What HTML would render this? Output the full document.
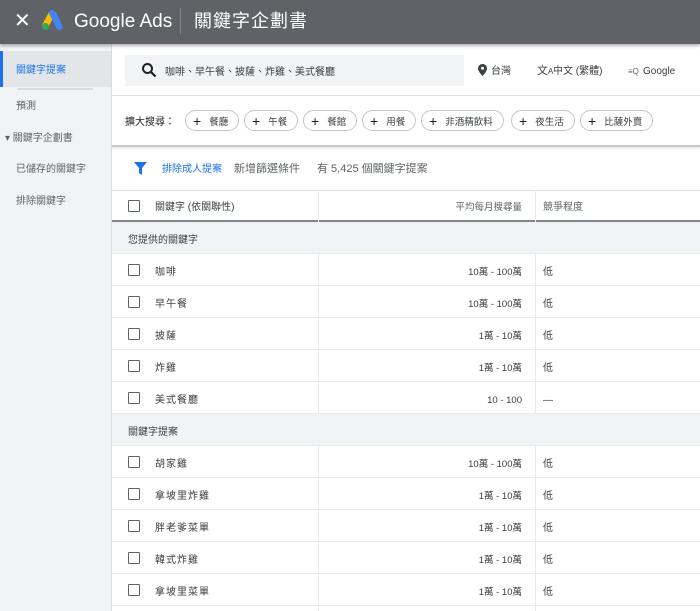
<!DOCTYPE html>
<html style="width:700px;height:611px;overflow:hidden"><head><meta charset="utf-8"><style>
*{margin:0;padding:0;box-sizing:border-box}
body{width:700px;height:611px;overflow:hidden;background:#fff;font-family:"Liberation Sans","Noto Sans CJK TC",sans-serif;position:relative;color:#3c4043}
.abs{position:absolute}
.hdr{left:0;top:0;width:700px;height:44px;background:#5f6368;box-shadow:0 2px 3px rgba(0,0,0,.3);z-index:5}
.side{left:0;top:44px;width:112px;height:567px;background:#f1f3f4;border-right:1px solid #dadce0}
.si{position:absolute;left:16px;font-size:10px;line-height:14px;color:#5f6368}
.row{position:absolute;left:112px;width:588px;height:32px;border-bottom:1px solid #e8eaed;font-size:10px;line-height:31px;color:#3c4043}
.row .cb{position:absolute;left:16px;top:10px;width:12px;height:12px;border:1.5px solid #5f6368;border-radius:1px}
.row .kw{position:absolute;left:43px;top:3px;letter-spacing:1px}
.row .vol{position:absolute;right:178px;top:3px;font-size:9.5px}
.row .cmp{position:absolute;left:431px;top:3px}
.row .d1{position:absolute;left:206px;top:0;height:32px;border-left:1px solid #e8eaed}
.row .d2{position:absolute;left:423px;top:0;height:32px;border-left:1px solid #e8eaed}
.sec{position:absolute;left:112px;width:588px;height:32px;background:#f1f3f4;border-bottom:1px solid #e8eaed;font-size:10px;line-height:31px;color:#3c4043;padding:3px 0 0 16px}
.chip{position:absolute;top:110px;height:21px;border:1px solid #c4c7c5;border-radius:11px;font-size:9.5px;color:#3c4043;line-height:19px;padding:1px 10px 0 7px;white-space:nowrap}
.chip b{font-weight:normal;font-size:14px;color:#202124;margin-right:8px;vertical-align:-1px}
</style></head><body>
<div class="abs hdr">
  <div class="abs" style="left:14px;top:10px;color:#fff;font-size:20px;line-height:22px">✕</div>
  <svg class="abs" style="left:40px;top:10px" width="24" height="22" viewBox="0 0 24 22">
    <path d="M9 2 L16 2 L22 15 L16 18 Z" fill="#4285f4"/>
    <path d="M9 2 L2 15 L8 18 L12.5 9 Z" fill="#fbbc04"/>
    <circle cx="5.5" cy="16.5" r="3.5" fill="#34a853"/>
    <path d="M12 3 L19.5 17" stroke="#4285f4" stroke-width="6" stroke-linecap="round"/>
  </svg>
  <div class="abs" style="left:74px;top:11px;color:#fff;font-size:19px;line-height:22px">Google Ads</div>
  <div class="abs" style="left:180px;top:8px;width:1px;height:26px;background:#80868b"></div>
  <div class="abs" style="left:194px;top:10px;color:#fff;font-size:18px;line-height:22px;letter-spacing:1px">關鍵字企劃書</div>
</div>
<div class="abs side">
  <div class="abs" style="left:0;top:7px;width:111px;height:36px;background:#e3e5e8"></div>
  <div class="abs" style="left:0;top:7px;width:3px;height:36px;background:#1a73e8"></div>
  <div class="si" style="top:20px;color:#1a73e8">關鍵字提案</div>
  <div class="abs" style="left:18px;top:44px;width:75px;height:2px;background:#dadce0"></div>
  <div class="si" style="top:56px">預測</div>
  <div class="si" style="left:5px;top:88px">▾ 關鍵字企劃書</div>
  <div class="si" style="top:119px">已儲存的關鍵字</div>
  <div class="si" style="top:151px">排除關鍵字</div>
</div>
<div class="abs" style="left:125px;top:55px;width:339px;height:31px;background:#f1f3f4"></div>
<svg class="abs" style="left:141px;top:62px" width="16" height="16" viewBox="0 0 16 16"><circle cx="6.5" cy="6.5" r="4.5" fill="none" stroke="#202124" stroke-width="2"/><path d="M10 10 L14.5 14.5" stroke="#202124" stroke-width="2.2"/></svg>
<div class="abs" style="left:165px;top:66px;font-size:10px;line-height:14px;color:#3c4043">咖啡、早午餐、披薩、炸雞、美式餐廳</div>
<svg class="abs" style="left:478px;top:64px" width="9" height="12" viewBox="0 0 9 12"><path d="M4.5 0 C2 0 0 2 0 4.5 C0 7.5 4.5 12 4.5 12 C4.5 12 9 7.5 9 4.5 C9 2 7 0 4.5 0Z" fill="#3c4043"/><circle cx="4.5" cy="4.3" r="1.5" fill="#fff"/></svg>
<div class="abs" style="left:491px;top:65px;font-size:10px;line-height:14px">台灣</div>
<div class="abs" style="left:537px;top:64px;font-size:11px;line-height:14px;color:#3c4043">文<span style="font-size:8px">A</span></div>
<div class="abs" style="left:553px;top:65px;font-size:10px;line-height:14px">中文 (繁體)</div>
<div class="abs" style="left:628px;top:66px;font-size:8px;line-height:12px;color:#5f6368">≡Q</div>
<div class="abs" style="left:643px;top:65px;font-size:10px;line-height:14px">Google</div>
<div class="abs" style="left:112px;top:95px;width:588px;height:1px;background:#e0e0e0"></div>
<div class="abs" style="left:125px;top:116px;font-size:10px;line-height:14px;color:#202124">擴大搜尋：</div>
<div class="chip" style="left:185px"><b>+</b>餐廳</div>
<div class="chip" style="left:244px"><b>+</b>午餐</div>
<div class="chip" style="left:303px"><b>+</b>餐館</div>
<div class="chip" style="left:362px"><b>+</b>用餐</div>
<div class="chip" style="left:421px"><b>+</b>非酒精飲料</div>
<div class="chip" style="left:511px"><b>+</b>夜生活</div>
<div class="chip" style="left:580px"><b>+</b>比薩外賣</div>
<div class="abs" style="left:112px;top:145px;width:588px;height:2px;background:#c8c9cb;box-shadow:0 1px 2px rgba(0,0,0,.15)"></div>
<svg class="abs" style="left:134px;top:162px" width="13" height="13" viewBox="0 0 13 13"><path d="M0 0 H13 L8 6 V13 L5 11 V6 Z" fill="#1a73e8"/></svg>
<div class="abs" style="left:162px;top:163px;font-size:10px;line-height:14px;color:#1a73e8">排除成人提案</div>
<div class="abs" style="left:234px;top:162px;font-size:11px;line-height:14px;color:#5f6368">新增篩選條件</div>
<div class="abs" style="left:317px;top:162px;font-size:11px;line-height:14px;color:#5f6368">有 5,425 個關鍵字提案</div>
<div class="abs" style="left:112px;top:190px;width:588px;height:1px;background:#e0e0e0"></div>
<div class="row" style="top:190px;border-bottom:2px solid #80868b;height:32px;line-height:30px"><div class="cb"></div><div class="kw" style="letter-spacing:0">關鍵字 (依關聯性)</div><div class="d1"></div><div class="d2"></div><div class="vol" style="color:#5f6368">平均每月搜尋量</div><div class="cmp" style="color:#5f6368">競爭程度</div></div>
<div class="sec" style="top:222px">您提供的關鍵字</div>
<div class="row" style="top:254px"><div class="cb"></div><div class="kw">咖啡</div><div class="d1"></div><div class="d2"></div><div class="vol">10萬 - 100萬</div><div class="cmp">低</div></div>
<div class="row" style="top:286px"><div class="cb"></div><div class="kw">早午餐</div><div class="d1"></div><div class="d2"></div><div class="vol">10萬 - 100萬</div><div class="cmp">低</div></div>
<div class="row" style="top:318px"><div class="cb"></div><div class="kw">披薩</div><div class="d1"></div><div class="d2"></div><div class="vol">1萬 - 10萬</div><div class="cmp">低</div></div>
<div class="row" style="top:350px"><div class="cb"></div><div class="kw">炸雞</div><div class="d1"></div><div class="d2"></div><div class="vol">1萬 - 10萬</div><div class="cmp">低</div></div>
<div class="row" style="top:382px"><div class="cb"></div><div class="kw">美式餐廳</div><div class="d1"></div><div class="d2"></div><div class="vol">10 - 100</div><div class="cmp">—</div></div>
<div class="sec" style="top:414px">關鍵字提案</div>
<div class="row" style="top:446px"><div class="cb"></div><div class="kw">胡家雞</div><div class="d1"></div><div class="d2"></div><div class="vol">10萬 - 100萬</div><div class="cmp">低</div></div>
<div class="row" style="top:478px"><div class="cb"></div><div class="kw">拿坡里炸雞</div><div class="d1"></div><div class="d2"></div><div class="vol">1萬 - 10萬</div><div class="cmp">低</div></div>
<div class="row" style="top:510px"><div class="cb"></div><div class="kw">胖老爹菜單</div><div class="d1"></div><div class="d2"></div><div class="vol">1萬 - 10萬</div><div class="cmp">低</div></div>
<div class="row" style="top:542px"><div class="cb"></div><div class="kw">韓式炸雞</div><div class="d1"></div><div class="d2"></div><div class="vol">1萬 - 10萬</div><div class="cmp">低</div></div>
<div class="row" style="top:574px"><div class="cb"></div><div class="kw">拿坡里菜單</div><div class="d1"></div><div class="d2"></div><div class="vol">1萬 - 10萬</div><div class="cmp">低</div></div>
<div class="row" style="top:606px;height:5px;border-bottom:none"><div class="d1" style="height:5px"></div><div class="d2" style="height:5px"></div></div>
</body></html>
